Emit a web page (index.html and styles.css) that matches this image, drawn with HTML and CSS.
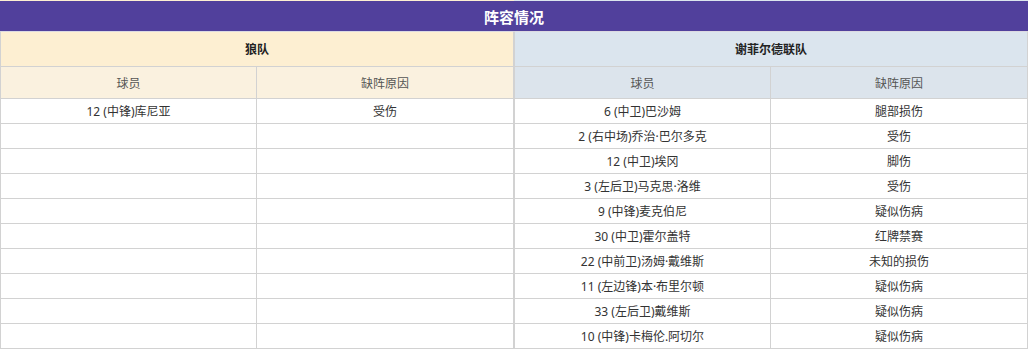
FILE: index.html
```html
<!DOCTYPE html>
<html lang="zh-CN">
<head>
<meta charset="utf-8">
<title>阵容情况</title>
<link rel="stylesheet" href="styles.css">
</head>
<body>
<div class="lineup">
  <div class="strip"><span class="strip-home"></span><span class="strip-away"></span></div>
  <div class="title">阵容情况</div>
  <div class="teams">
    <div class="team home">
      <div class="team-name">狼队</div>
      <div class="col-head">球员</div><div class="col-head">缺阵原因</div>
      <div class="cell">12 (中锋)库尼亚</div><div class="cell">受伤</div>
      <div class="cell"></div><div class="cell"></div>
      <div class="cell"></div><div class="cell"></div>
      <div class="cell"></div><div class="cell"></div>
      <div class="cell"></div><div class="cell"></div>
      <div class="cell"></div><div class="cell"></div>
      <div class="cell"></div><div class="cell"></div>
      <div class="cell"></div><div class="cell"></div>
      <div class="cell"></div><div class="cell"></div>
      <div class="cell"></div><div class="cell"></div>
    </div>
    <div class="team away">
      <div class="team-name">谢菲尔德联队</div>
      <div class="col-head">球员</div><div class="col-head">缺阵原因</div>
      <div class="cell">6 (中卫)巴沙姆</div><div class="cell">腿部损伤</div>
      <div class="cell">2 (右中场)乔治·巴尔多克</div><div class="cell">受伤</div>
      <div class="cell">12 (中卫)埃冈</div><div class="cell">脚伤</div>
      <div class="cell">3 (左后卫)马克思·洛维</div><div class="cell">受伤</div>
      <div class="cell">9 (中锋)麦克伯尼</div><div class="cell">疑似伤病</div>
      <div class="cell">30 (中卫)霍尔盖特</div><div class="cell">红牌禁赛</div>
      <div class="cell">22 (中前卫)汤姆·戴维斯</div><div class="cell">未知的损伤</div>
      <div class="cell">11 (左边锋)本·布里尔顿</div><div class="cell">疑似伤病</div>
      <div class="cell">33 (左后卫)戴维斯</div><div class="cell">疑似伤病</div>
      <div class="cell">10 (中锋)卡梅伦.阿切尔</div><div class="cell">疑似伤病</div>
    </div>
  </div>
</div>
</body>
</html>
```
FILE: styles.css
```css
html, body {
  margin: 0;
  padding: 0;
  background: #ffffff;
}

body {
  font-family: "Noto Sans", "Noto Sans CJK SC", sans-serif;
  font-size: 12px;
  color: #333333;
}

.lineup {
  width: 1028px;
}

.strip {
  display: flex;
  height: 1px;
}

.strip-home {
  flex: 0 0 514px;
  background: #fdefd2;
}

.strip-away {
  flex: 1;
  background: #dbe5ee;
}

.title {
  height: 30px;
  background: #51409c;
  color: #ffffff;
  font-size: 15px;
  font-weight: bold;
  display: flex;
  align-items: center;
  justify-content: center;
}

.teams {
  display: flex;
}

.team {
  flex: 0 0 514px;
  box-sizing: border-box;
  display: grid;
  grid-template-columns: 255px 256px;
  grid-template-rows: 34px 31px repeat(10, 24px);
  gap: 1px;
  background: #d2d2d2;
  border: 1px solid #d2d2d2;
  border-top-color: #dcdae2;
}

.team-name {
  grid-column: 1 / 3;
  display: flex;
  align-items: center;
  justify-content: center;
  font-weight: bold;
  color: #222222;
}

.col-head,
.cell {
  display: flex;
  align-items: center;
  justify-content: center;
  white-space: nowrap;
}

.col-head {
  color: #555555;
}

.cell {
  background: #ffffff;
  color: #333333;
}

.home .team-name {
  background: #fdefd2;
}

.home .col-head {
  background: #faf1df;
}

.away .team-name {
  background: #dbe5ee;
}

.away .col-head {
  background: #dce4ec;
}
```
